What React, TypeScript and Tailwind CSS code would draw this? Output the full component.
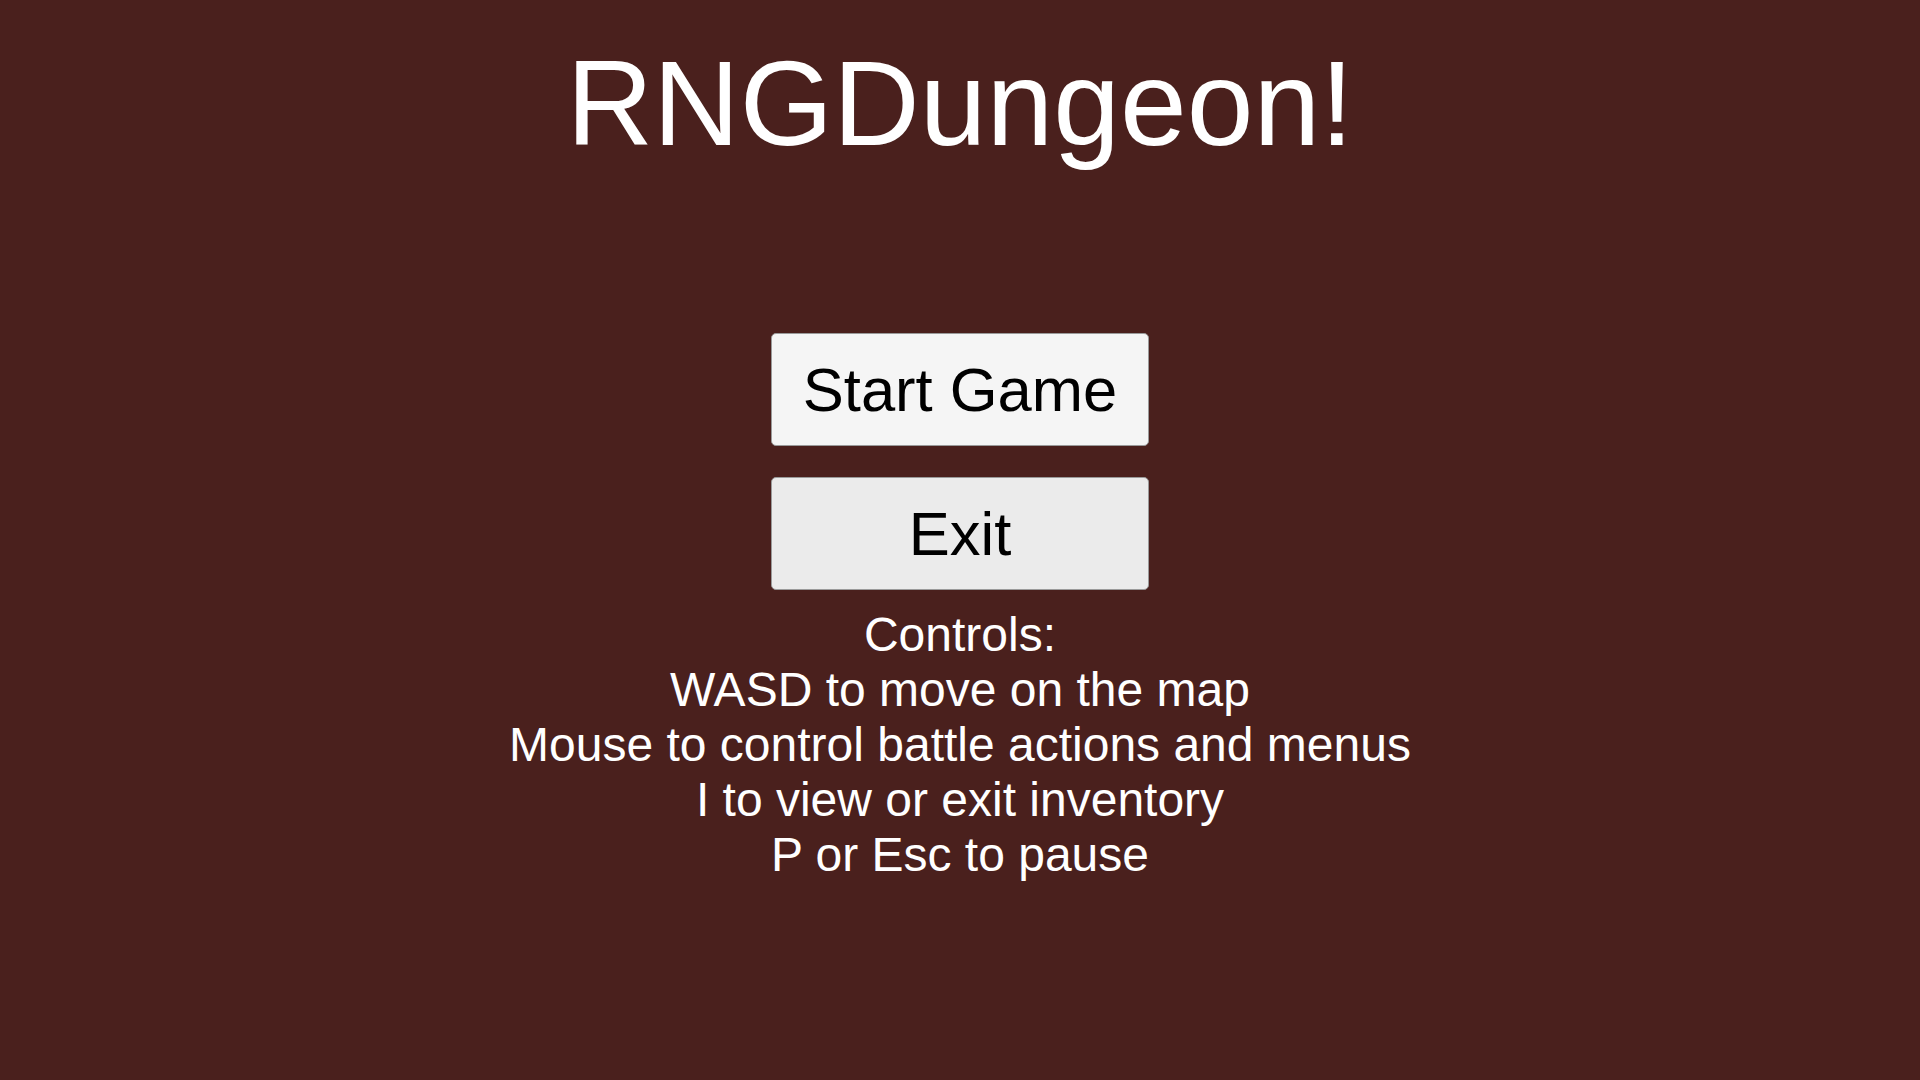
import React from "react";

export default function App() {
  const lines = [
    "Controls:",
    "WASD to move on the map",
    "Mouse to control battle actions and menus",
    "I to view or exit inventory",
    "P or Esc to pause",
  ];
  return (
    <div
      className="w-[1920px] h-[1080px] bg-[#4a201d] flex flex-col items-center overflow-hidden"
      style={{ fontFamily: '"Liberation Sans", Arial, sans-serif' }}
    >
      <h1 className="pt-[43px] text-[120px] leading-[120px] text-white font-normal">
        RNGDungeon!
      </h1>
      <button className="mt-[170px] w-[378px] h-[113px] rounded-[5px] border border-[#9a9a9a] bg-[#f5f5f5] text-black text-[61.5px] leading-[62px] flex items-center justify-center">
        Start Game
      </button>
      <button className="mt-[31px] w-[378px] h-[113px] rounded-[5px] border border-[#9a9a9a] bg-[#ebebeb] text-black text-[61.5px] leading-[62px] flex items-center justify-center">
        Exit
      </button>
      <div className="mt-[17px] text-white text-[48px] leading-[55px] text-center">
        {lines.map((l) => (
          <div key={l}>{l}</div>
        ))}
      </div>
    </div>
  );
}
